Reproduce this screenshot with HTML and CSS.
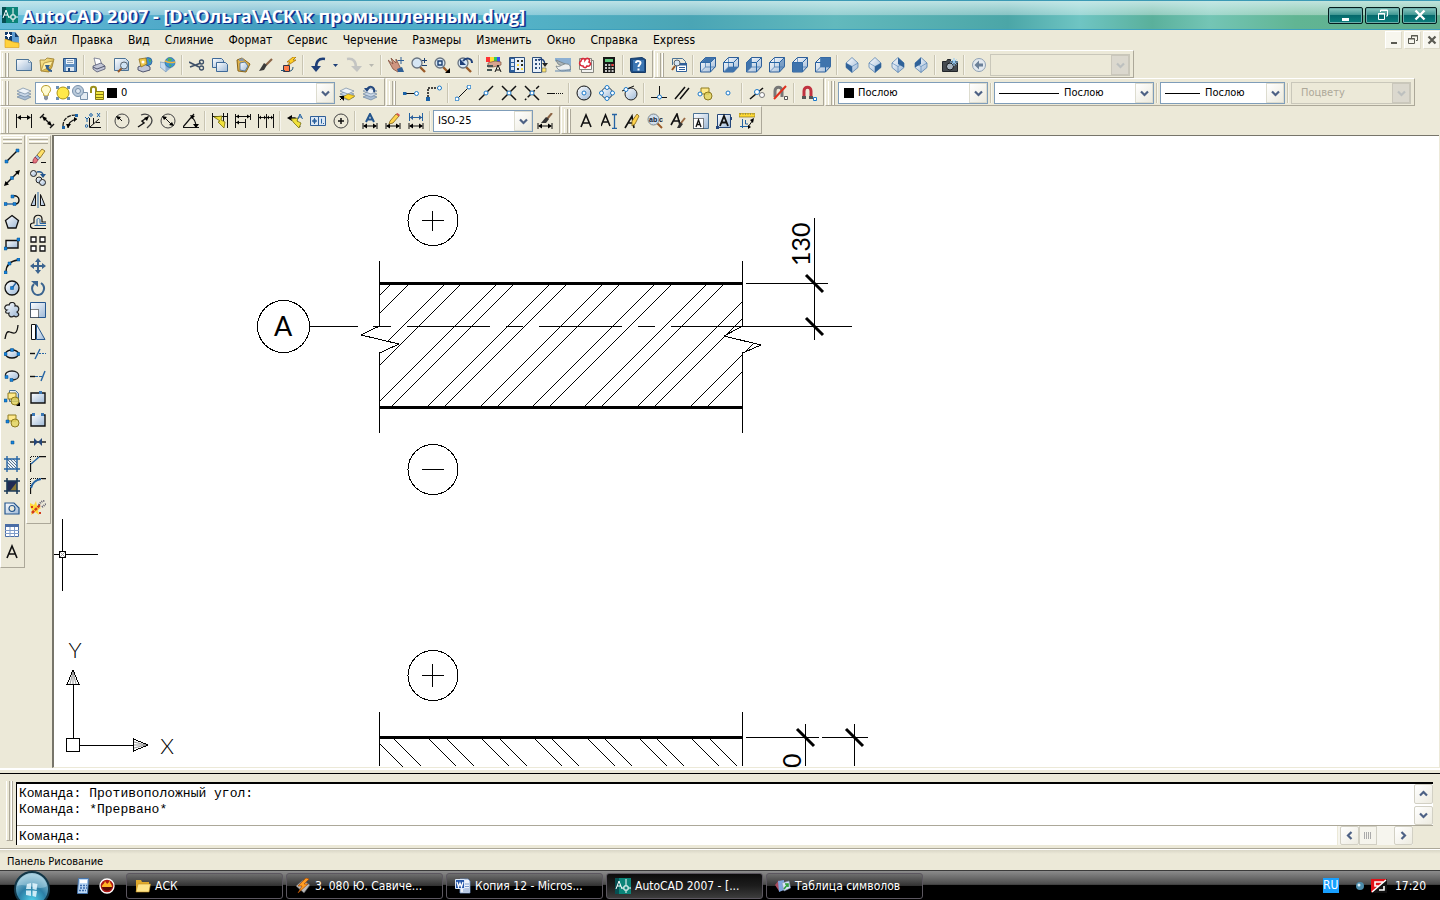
FILE: index.html
```html
<!DOCTYPE html>
<html lang="ru">
<head>
<meta charset="utf-8">
<title>AutoCAD 2007 - [D:\Ольга\АСК\к промышленным.dwg]</title>
<link rel="stylesheet" href="styles.css">
</head>
<body>
<svg class="defs" aria-hidden="true">
  <defs>
    <linearGradient id="gp" x1="0" y1="0" x2="1" y2="1"><stop offset="0" stop-color="#fff"/><stop offset="1" stop-color="#9db8d6"/></linearGradient>
    <linearGradient id="gy" x1="0" y1="0" x2="1" y2="1"><stop offset="0" stop-color="#fff3a8"/><stop offset="1" stop-color="#c99a1c"/></linearGradient>
    <radialGradient id="orb" cx=".5" cy=".85" r=".9"><stop offset="0" stop-color="#4fd0ea"/><stop offset=".45" stop-color="#2c7fa6"/><stop offset="1" stop-color="#b9d9e6"/></radialGradient>
    <symbol id="acad" viewBox="0 0 16 16"><path fill="#0b8478" d="M0 0h16v16H0z"/><path fill="#064f52" d="M0 0h4v16H0z"/><path class="w" d="M1 11 4 3l3 8M2 8h4M11 1v14M7 10h9"/><path fill="#0b8478" stroke="#fff" d="M9 8h4v4H9z"/></symbol>
    <symbol id="layers" viewBox="0 0 16 16"><path fill="#a9bdd4" stroke="#5c7796" stroke-width=".6" d="m1 12 6-3 8 3-6 3z"/><path fill="#c8d6e6" stroke="#5c7796" stroke-width=".6" d="m1 9 6-3 8 3-6 3z"/><path fill="#eef3f8" stroke="#5c7796" stroke-width=".6" d="m1 6 6-3 8 3-6 3z"/></symbol>
    <symbol id="zoomglass" viewBox="0 0 16 16"><path stroke="#9a5a28" stroke-width="2.4" d="m9 10 5 5"/><circle cx="6" cy="6" r="5" fill="#d6e6f5" stroke="#6a7480" stroke-width="1.3"/></symbol>
    <symbol id="dimbase" viewBox="0 0 16 16"><path class="k" d="M1 10v6M15 10v6M2 13h12"/><path d="M1 13l4-2.500v5zM15 13l-4-2.500v5z"/></symbol>
    <symbol id="shapes" viewBox="0 0 16 16"><path fill="#ffe98a" stroke="#8d7a1f" d="M4 3h8v6H4z"/><circle cx="11" cy="11" r="4" fill="#e4d35a" fill-opacity=".8" stroke="#8d7a1f"/></symbol>
    <symbol id="cube" viewBox="0 0 16 16"><path fill="url(#gp)" stroke="#2f5f98" d="m.500 5.500 5-5h10v9l-5 5.500H.500z"/><path class="b2" stroke-opacity=".6" d="M5.500.500v9.500h10M5.500 10l-5 5"/><path class="b2" d="M.5 5.500h10v9.500M10.500 5.500l5-5"/></symbol>
    <symbol id="gem" viewBox="0 0 16 16"><path fill="url(#gp)" stroke="#5b84b0" stroke-width=".8" d="m8 .500 6 5.500v4.500l-6 5-6-5V6z"/><path class="b2" stroke-opacity=".6" stroke-width=".8" d="m2 6 6 3.500L14 6M8 9.500v6"/></symbol>
    <symbol id="ar" viewBox="0 0 9 9"><path fill="none" stroke="#4d6185" stroke-width="2.200" d="m1 2.500 3.500 3.500L8 2.500"/></symbol>
  </defs>
</svg>

<header class="title">
  <svg class="ic" viewBox="0 0 16 16"><use href="#acad"/></svg>
  <h1>AutoCAD 2007 - [D:\Ольга\АСК\к промышленным.dwg]</h1>
  <div class="winbtns">
    <button aria-label="Свернуть"><svg viewBox="0 0 12 12"><path fill="#fff" d="M2 9h7v3H2z"/></svg></button>
    <button aria-label="Восстановить"><svg viewBox="0 0 12 12"><path class="w" d="M3.500 3V1h7v6H9M4 1.500h7"/><path class="w" d="M1.500 4.500h6v6h-6zM1 5h7"/></svg></button>
    <button aria-label="Закрыть"><svg viewBox="0 0 12 12"><path stroke="#fff" stroke-width="2.400" d="m1.500 1.500 9 9m0-9-9 9"/></svg></button>
  </div>
</header>

<nav class="menu">
  <svg class="ic" viewBox="0 0 16 16"><path fill="#123b6c" d="M1 0h10l4 5v6H1z"/><path fill="#5f9cd2" d="M11 0v5h4v6H8V0z"/><path stroke="#fff" fill="none" d="M4.500 0v7M1 3.500h7"/><path fill="#fff" d="M3 2h3v3H3z"/><path fill="#ffd23c" stroke="#d99a12" stroke-width=".6" d="m1 7 6 2 2 1 6 1v4.500H1z"/></svg>
  <button>Файл</button><button>Правка</button><button>Вид</button><button>Слияние</button><button>Формат</button><button>Сервис</button><button>Черчение</button><button>Размеры</button><button>Изменить</button><button>Окно</button><button>Справка</button><button>Express</button>
  <div class="mdi">
    <button aria-label="Свернуть окно"><svg viewBox="0 0 10 10"><path fill="#5a5a52" d="M2 7h6v2H2z"/></svg></button>
    <button aria-label="Восстановить окно"><svg viewBox="0 0 10 10"><path fill="none" stroke="#5a5a52" d="M3.500 3V.500h6v5H8M3 1h7M.500 3.500h6v5h-6zM0 4h7"/></svg></button>
    <button aria-label="Закрыть окно"><svg viewBox="0 0 10 10"><path stroke="#5a5a52" stroke-width="2.200" d="m1.500 1.500 7 7m0-7-7 7"/></svg></button>
  </div>
</nav>

<div class="row">
  <div class="tb" role="toolbar" aria-label="Стандартная">
    <i class="grip"></i>
    <button aria-label="Создать"><svg viewBox="0 0 16 16"><path fill="url(#gp)" stroke="#4c7396" d="M.500 2.500h12l3 3v8H.500z"/><path fill="#fff" stroke="#4c7396" stroke-width=".6" d="M12.500 2.500v3h3z"/></svg></button>
    <button aria-label="Открыть"><svg viewBox="0 0 16 16"><path fill="url(#gy)" stroke="#9a7a26" stroke-width=".8" d="M1 3h5l2-2 7 1-2 8-3 5-8-1z"/><path fill="#fff0a8" stroke="#9a7a26" stroke-width=".6" d="m2 14 3-8 9-2-3 6z"/><path stroke="#35608e" stroke-width="2" fill="none" d="M13 14c-3 0-4-2-5-4"/><path fill="#35608e" d="m6 8 5 0-3 5z"/></svg></button>
    <button aria-label="Сохранить"><svg viewBox="0 0 16 16"><path fill="#5e8fc2" stroke="#274f80" d="M1.500 1.500h13v13h-13z"/><path fill="#eef4fa" d="M4 2h8v5H4z"/><path fill="#8fa5ba" d="M5 3h6v1H5zM5 5h6v1H5z"/><path fill="#dce6f0" d="M4 10h8v4H4z"/><path fill="#274f80" d="M6 11h2v3H6z"/></svg></button>
    <i class="sep"></i>
    <button aria-label="Печать"><svg viewBox="0 0 16 16"><path fill="#fff" stroke="#6a6f86" stroke-width=".8" d="m3 1 6 1 2 6-6 1z"/><path fill="#c2c6d6" stroke="#50556e" stroke-width=".8" d="m2 9 8-3 4 3v3l-8 3-4-3z"/><path fill="none" stroke="#50556e" d="m2 10 4 2 8-3"/></svg></button>
    <button aria-label="Просмотр"><svg viewBox="0 0 16 16"><path fill="url(#gp)" stroke="#4c7396" d="M.500 1.500h11l3 3v9H.500z"/><path stroke="#9a5a28" stroke-width="2" d="m8 11-4 4"/><circle cx="10" cy="8.500" r="3.500" fill="#cfe2f4" stroke="#59626c"/></svg></button>
    <button aria-label="Публикация"><svg viewBox="0 0 16 16"><path fill="#c2c6d6" stroke="#50556e" d="m1 10 7-3 5 3v3l-7 2-5-2z"/><circle cx="11" cy="4.500" r="4" fill="#3f8ed0" stroke="#1d548c" stroke-width=".7"/><path fill="#efc84b" stroke="#93701a" stroke-width=".8" d="m2 2 7-1 1 6-6 3z"/><circle cx="6" cy="5" r="1.500" fill="#fff"/><path fill="#52b04a" d="m11 2 3 1-1 3z"/></svg></button>
    <button aria-label="3D DWF"><svg viewBox="0 0 16 16"><path fill="#c9dcef" stroke="#7596b8" stroke-width=".7" d="m0 5 6 1v9l-6-5z"/><path fill="#8fb0d2" d="m6 15 5-4V6H6z"/><circle cx="10" cy="5.500" r="5" fill="#3c95d2" stroke="#235f92" stroke-width=".6"/><path fill="none" stroke="#eeb53d" stroke-width="1.500" d="M5 4c4 2 7 2 10 1"/><path fill="#57b24d" d="m8 1 4 1-1 2-3 0zM9 7l3 1-2 2z"/></svg></button>
    <i class="sep"></i>
    <button aria-label="Вырезать"><svg viewBox="0 0 16 16"><path stroke="#3e5068" stroke-width="1.600" fill="none" d="m0 5 10 5M1 10l11-4"/><circle cx="12.500" cy="5" r="2" fill="none" stroke="#3e5068" stroke-width="1.300"/><circle cx="12.500" cy="11" r="2" fill="none" stroke="#3e5068" stroke-width="1.300"/></svg></button>
    <button aria-label="Копировать"><svg viewBox="0 0 16 16"><path fill="url(#gp)" stroke="#3f6a99" d="M.500 1.500h9l2 2v7H.500z"/><path fill="url(#gp)" stroke="#3f6a99" d="M4.500 5.500h9l2 2v7h-11z"/></svg></button>
    <button aria-label="Вставить"><svg viewBox="0 0 16 16"><path fill="#e0b24c" stroke="#8a6518" d="m2 3 5-2 8 6-4 8-8-1z"/><path fill="url(#gp)" stroke="#3f6a99" stroke-width=".8" d="m5 6 5-1 3 4-3 5-5-1z"/><path fill="#8b97a6" d="m4 2 4-1 1 3H4z"/></svg></button>
    <button aria-label="Копирование свойств"><svg viewBox="0 0 16 16"><path stroke="#8c6546" stroke-width="2.200" d="m8 8 6-6"/><path fill="#3a3a3a" d="m1 14 5-8 3 2-3 5z"/></svg></button>
    <button aria-label="Редактор блоков"><svg viewBox="0 0 16 16"><path fill="#ffcf26" stroke="#9c6500" stroke-width=".7" d="m12 0-6 5h3L6 9l9-6h-3l3-3z"/><path fill="#ff7a45" stroke="#334" d="M2.500 8.500h6v6h-6z"/><path stroke="#257" fill="none" d="M0 13.500h4M12 10c0 3-2 4-3 4"/></svg></button>
    <i class="sep"></i>
    <button aria-label="Отменить"><svg viewBox="0 0 16 16"><path fill="none" stroke="#1e3f78" stroke-width="2.500" d="M15 2C8 1 6 5 6 11"/><path fill="#1e3f78" d="M1 9h10l-5 6z"/></svg></button>
    <button class="drop" aria-label="Список отмен"><svg viewBox="0 0 5 3"><path fill="#1e3f78" d="M0 0h5L2.500 3z"/></svg></button>
    <button aria-label="Повторить"><svg viewBox="0 0 16 16"><path fill="none" stroke="#c3c4c2" stroke-width="2.500" d="M1 2c7-1 9 3 9 9"/><path fill="#c3c4c2" d="M5 9h11l-5 6z"/></svg></button>
    <button class="drop" aria-label="Список повторов"><svg viewBox="0 0 5 3"><path fill="#b8b8b0" d="M0 0h5L2.500 3z"/></svg></button>
    <i class="sep"></i>
    <button aria-label="Панорамирование"><svg viewBox="0 0 16 16"><path fill="#cf9580" stroke="#83503f" stroke-width=".8" d="m0 3 5 4-2-6 5 5 0-4 3 6 2 4-3 3-5-3z"/><path fill="#2e5f96" d="m9 12 5-2 2 5h-6z"/><path stroke="#2e5f96" d="M13 0v7M9.500 3.500h6.500"/></svg></button>
    <button aria-label="Зумирование в реальном времени"><svg viewBox="0 0 16 16"><use href="#zoomglass"/><path stroke="#1c3f70" d="M11 3.500h5M13.500 1v5M11 8.500h5"/></svg></button>
    <button aria-label="Зумирование рамкой"><svg viewBox="0 0 16 16"><use href="#zoomglass"/><path fill="none" stroke="#1c3f70" stroke-width="1.400" d="M4 4h4v4H4z"/><path d="M16 11v5h-5z"/></svg></button>
    <button aria-label="Зумирование предыдущее"><svg viewBox="0 0 16 16"><use href="#zoomglass"/><path fill="none" stroke="#1e3f78" stroke-width="2" d="M15 6c0-5-6-6-9-2"/><path fill="#1e3f78" d="M3 2v6h6z"/></svg></button>
    <i class="sep"></i>
    <button aria-label="Свойства"><svg viewBox="0 0 16 16"><path fill="#f33" d="M0 0h4v5H0z"/><path fill="#fd3" d="M4 0h4v5H4z"/><path fill="#3c5" d="M8 0h3v5H8z"/><path fill="#35e" d="M11 0h3v5h-3z"/><path fill="#d9a590" stroke="#7c5140" stroke-width=".7" d="m2 6 7-2 6 1v3l-8 2-5 0z"/><path stroke="#455" stroke-width="2" d="M1 9h6M1 13h5"/><path class="k" d="m9 15 3-7 3 7m-5-2h4"/></svg></button>
    <button aria-label="Центр управления"><svg viewBox="0 0 16 16"><path fill="#e8f0f8" stroke="#2d4f7c" d="M.500.500h15v15H.500z"/><path fill="#2d5f9c" d="M1 1h5v14H1z"/><path fill="#d9e5f2" d="M2 2h3v3H2zM2 6h3v3H2zM2 10h3v3H2z"/><path stroke="#2c2c1f" stroke-width="2" stroke-dasharray="2 2" d="M8 4h6M8 8h6M8 12h6"/><path fill="#ffdc3c" d="M8 7h2v2H8zM12 11h2v2h-2z"/></svg></button>
    <button aria-label="Инструментальные палитры"><svg viewBox="0 0 16 16"><path fill="#e8f0f8" stroke="#2d4f7c" d="M.500.500h9v15h-9z"/><path stroke="#2d4f7c" stroke-width="2" stroke-dasharray="2 2" d="M3 3h5M3 7h5M3 11h5"/><path fill="none" stroke="#1e3f78" stroke-width="1.500" d="M6 3c4-2 7 0 7 5"/><path fill="#222" d="M10 6h6l-3 4z"/><path fill="#ffe36a" stroke="#776" stroke-width=".7" d="M10 11h4v4h-4z"/></svg></button>
    <button aria-label="Диспетчер подшивок"><svg viewBox="0 0 16 16"><path fill="#8db0d2" d="M0 1h16v12L0 4z"/><path fill="#aeb7bb" stroke="#747d82" stroke-width=".8" d="m1 3 14 6v4L3 7z"/><path fill="#eef0f0" stroke="#747d82" stroke-width=".8" d="M1 9c4 2 7-3 11-2 3 0 4 3 3 6-5 0-9 3-13-2z"/><path fill="#5e86b0" d="m0 13 16-1v3H0z" fill-opacity=".5"/></svg></button>
    <button aria-label="Набор пометок"><svg viewBox="0 0 16 16"><path fill="#f2f2ef" stroke="#85857e" d="M3.500 3.500h12v12h-12z"/><path fill="#fff" stroke="#85857e" d="M1.500 1.500h12v11h-12z"/><path fill="#fff" stroke="#d9293a" stroke-width="1.600" d="M3 4c0-3 4-3 4-1 2-3 6-1 4 2 3 1 1 5-2 4-1 3-4 1-4 0-4 0-4-4-2-5z"/></svg></button>
    <button aria-label="Калькулятор"><svg viewBox="0 0 16 16"><path fill="#171717" d="M2 0h12v16H2z"/><path fill="#5fc77b" d="M4 2h8v3H4z"/><path stroke="#fff" stroke-width="1.500" stroke-dasharray="2 1.300" d="M4 8h9M4 11h9M4 14h9"/><path fill="#e33" d="M10.500 7h2v2h-2z"/></svg></button>
    <i class="sep"></i>
    <button aria-label="Справка"><svg viewBox="0 0 16 16"><path fill="#1f4f86" stroke="#163b66" d="M.500 1.500 12 .500l3.500 2v13h-14l-1-2z"/><path fill="#3c76b3" d="M3 3h11v11H3z"/><path fill="none" stroke="#fff" stroke-width="2" d="M6 6c0-3 5-2 4.500 0S8.500 8 8.500 10M8.500 11.500v2"/></svg></button>
  </div>
  <div class="tb" role="toolbar" aria-label="Вид">
    <i class="grip"></i>
    <button aria-label="Именованные виды"><svg viewBox="0 0 16 16"><path fill="none" stroke="#4c7396" d="M1.500 8V1.500h10l3 3V8"/><path fill="#fff" stroke="#2f5f98" d="M5.500 6.500h10v8h-10z"/><path fill="#2f5f98" d="M5 6h11v2.500H5zM8 10h6v1H8zM8 12h6v1H8z"/><circle cx="6" cy="6" r="3" fill="#d6e6f5" stroke="#59626c"/><path stroke="#9a5a28" stroke-width="2" d="m4 9-3 4"/></svg></button>
    <i class="sep"></i>
    <button aria-label="Сверху"><svg viewBox="0 0 16 16"><use href="#cube"/><path fill="#3f74ad" d="m1 5.500 5-5h9.500l-5 5z"/></svg></button>
    <button aria-label="Снизу"><svg viewBox="0 0 16 16"><use href="#cube"/><path fill="#3f74ad" d="m1 15 4.500-5h10l-5 5z"/></svg></button>
    <button aria-label="Слева"><svg viewBox="0 0 16 16"><use href="#cube"/><path fill="#3f74ad" d="m.500 5.500 5-5V10l-5 5z"/></svg></button>
    <button aria-label="Справа"><svg viewBox="0 0 16 16"><use href="#cube"/><path fill="#3f74ad" fill-opacity=".55" d="m10.500 5.500 5-5V10l-5 5z"/></svg></button>
    <button aria-label="Спереди"><svg viewBox="0 0 16 16"><use href="#cube"/><path fill="#3f74ad" d="M.500 5.500h10V15H.500z"/></svg></button>
    <button aria-label="Сзади"><svg viewBox="0 0 16 16"><use href="#cube"/><path fill="#3f74ad" d="M5.500.500h10V10h-10z"/></svg></button>
    <i class="sep"></i>
    <button aria-label="ЮЗ изометрия"><svg viewBox="0 0 16 16"><use href="#gem"/><path fill="#2f6299" d="m2 6 6 3.500v6l-6-5z"/></svg></button>
    <button aria-label="ЮВ изометрия"><svg viewBox="0 0 16 16"><use href="#gem"/><path fill="#2f6299" d="m14 6-6 3.500v6l6-5z"/></svg></button>
    <button aria-label="СВ изометрия"><svg viewBox="0 0 16 16"><use href="#gem"/><path fill="#2f6299" d="m8 .500 6 5.500v4.500L8 7z"/></svg></button>
    <button aria-label="СЗ изометрия"><svg viewBox="0 0 16 16"><use href="#gem"/><path fill="#2f6299" d="M8 .500 2 6v4.500L8 7z"/></svg></button>
    <i class="sep"></i>
    <button aria-label="Камера"><svg viewBox="0 0 16 16"><path fill="#454a4f" stroke="#22262a" d="M.500 4.500h4l1-2h3v2h7v10H.500z"/><circle cx="8" cy="9.500" r="3.500" fill="#a7b3be" stroke="#15181b"/><path stroke="#8fc7f2" d="M12 1v8M8 5h8M9.500 2.500l5 5m0-5-5 5"/></svg></button>
    <i class="sep"></i>
    <button aria-label="Предыдущий вид"><svg viewBox="0 0 16 16"><circle cx="8" cy="8" r="6.500" fill="#e3e9ef" stroke="#8fa1b4"/><path fill="#6b8098" d="m3.500 8 4.500-4.500V6.500h4v3H8v3z"/></svg></button>
    <label class="combo off view"><select disabled aria-label="Вид"><option></option></select><span class="arrow"><svg viewBox="0 0 9 9"><use href="#ar"/></svg></span></label>
  </div>
</div>

<div class="row">
  <div class="tb" role="toolbar" aria-label="Слои">
    <i class="grip"></i>
    <button aria-label="Диспетчер слоев"><svg viewBox="0 0 16 16"><use href="#layers"/></svg></button>
    <label class="combo layer"><select aria-label="Слой"><option>0</option></select>
      <span class="state">
        <svg viewBox="0 0 16 16"><path fill="#fffbd0" stroke="#b79a24" d="M8 .500c5 0 6 5 2.500 8L10 11H6l-.500-2.500C2 5.500 3 .500 8 .500z"/><path fill="#8a93a0" d="M6 11h4v3l-2 1.500L6 14z"/></svg>
        <svg viewBox="0 0 16 16"><path fill="#6b8fb5" d="M1 1h3v3H1zM12 1h3v3h-3zM1 12h3v3H1zM12 12h3v3h-3z"/><circle cx="8" cy="8" r="6" fill="#ffe94a" stroke="#ad9414"/></svg>
        <svg viewBox="0 0 16 16"><path fill="#e5ecf3" stroke="#7890aa" d="M8.500 7.500h7v7h-7z"/><circle cx="6" cy="6" r="5.500" fill="#b9cadb" stroke="#7890aa"/><circle cx="6" cy="6" r="2.500" fill="#dfe8f1" stroke="#7890aa"/></svg>
        <svg viewBox="0 0 16 16"><path fill="none" stroke="#9a8f1a" stroke-width="2" d="M2 8V4c0-3 5-3 5 0v4"/><path fill="#efe33c" stroke="#857a12" d="M6.500 6.500h8v8h-8z"/><path stroke="#857a12" d="M7 9.500h7M7 12.500h7"/></svg>
        <b class="swatch"></b>
      </span>
      <span class="arrow"><svg viewBox="0 0 9 9"><use href="#ar"/></svg></span></label>
    <button aria-label="Сделать слой текущим"><svg viewBox="0 0 16 16"><use href="#layers"/><path fill="#ffd629" stroke="#8a7417" stroke-width=".6" d="m4 12 5-3 7 2-6 4z"/><path d="M0 11h5v5z"/><path stroke="#000" d="m1 15 3-3"/></svg></button>
    <button aria-label="Предыдущее состояние слоев"><svg viewBox="0 0 16 16"><use href="#layers"/><path fill="none" stroke="#24487e" stroke-width="2" d="M12 7c1-5-4-7-7-3"/><path fill="#24487e" d="M2 3h6L5 7z"/></svg></button>
  </div>
  <div class="tb" role="toolbar" aria-label="Объектная привязка">
    <i class="grip"></i>
    <button aria-label="Точка отслеживания"><svg viewBox="0 0 16 16"><path class="k" d="M2 8.500h10"/><path fill="#1a62a8" d="M0 7h3.500v3H0z"/><circle class="n" cx="13.500" cy="8.500" r="2"/></svg></button>
    <button aria-label="Смещение"><svg viewBox="0 0 16 16"><path class="k" stroke-width="1.500" stroke-dasharray="2 1" d="M2 12V3h10"/><path fill="#1a62a8" d="M0 12h4v4H0z"/><circle class="n" cx="13.500" cy="3" r="2"/></svg></button>
    <i class="sep"></i>
    <button aria-label="Конечная точка"><svg viewBox="0 0 16 16"><path class="k" d="M2 14 14 2"/><circle class="n" cx="2" cy="14" r="2"/><circle class="n" cx="14" cy="2" r="2"/></svg></button>
    <button aria-label="Середина"><svg viewBox="0 0 16 16"><path class="k" stroke-width="1.500" d="M1 15 15 1"/><circle class="n" cx="8" cy="8" r="2"/></svg></button>
    <button aria-label="Пересечение"><svg viewBox="0 0 16 16"><path class="k" stroke-width="1.500" d="M1 1l14 14M15 1 1 15"/><circle class="n" cx="8" cy="8" r="2"/></svg></button>
    <button aria-label="Кажущееся пересечение"><svg viewBox="0 0 16 16"><path class="k" stroke-width="1.500" d="m1 1 14 14"/><path class="k" stroke-width="1.500" stroke-dasharray="4 2" d="M15 1 1 15"/><circle class="n" cx="8" cy="8" r="2"/></svg></button>
    <button aria-label="Продолжение линии"><svg viewBox="0 0 16 16"><path class="k" d="M0 8.500h8"/><path class="k" stroke-dasharray="1 1" d="M9 8.500h7"/></svg></button>
    <i class="sep"></i>
    <button aria-label="Центр"><svg viewBox="0 0 16 16"><circle cx="8" cy="8" r="7" fill="url(#gp)" stroke="#111"/><circle class="n" cx="8" cy="8" r="2"/></svg></button>
    <button aria-label="Квадрант"><svg viewBox="0 0 16 16"><circle cx="8" cy="8" r="5.500" fill="url(#gp)" stroke="#345"/><circle class="n" cx="8" cy="2.500" r="2"/><circle class="n" cx="8" cy="13.500" r="2"/><circle class="n" cx="2.500" cy="8" r="2"/><circle class="n" cx="13.500" cy="8" r="2"/></svg></button>
    <button aria-label="Касательная"><svg viewBox="0 0 16 16"><circle cx="9" cy="9" r="6" fill="url(#gp)" stroke="#222"/><path class="k" d="M0 6 12 1"/><circle class="n" cx="4" cy="4.500" r="2"/></svg></button>
    <i class="sep"></i>
    <button aria-label="Нормаль"><svg viewBox="0 0 16 16"><path class="k" d="M8.500 1v10M0 12.500h16"/><circle class="n" cx="8.500" cy="12" r="2"/></svg></button>
    <button aria-label="Параллельно"><svg viewBox="0 0 16 16"><path class="k" stroke-width="1.500" d="M1 14 11 2M6 14 15 3"/></svg></button>
    <button aria-label="Точка вставки"><svg viewBox="0 0 16 16"><use href="#shapes"/><circle class="n" cx="3" cy="9" r="2"/></svg></button>
    <button aria-label="Узел"><svg viewBox="0 0 16 16"><circle class="n" cx="8" cy="8" r="2"/></svg></button>
    <i class="sep"></i>
    <button aria-label="Ближайшая"><svg viewBox="0 0 16 16"><path class="k" stroke-width="1.500" d="m1 14 13-11"/><circle class="n" cx="8" cy="7" r="2.500"/><circle cx="13" cy="10" r="2.500" fill="#fff" stroke="#777"/></svg></button>
    <button aria-label="Отключить привязку"><svg viewBox="0 0 16 16"><path fill="none" stroke="#777" stroke-width="3" d="M3 12V6c0-5 7-5 7 0v6"/><path stroke="#e0301e" stroke-width="2" d="M2 14 14 1"/><path fill="#fff" stroke="#555" d="M12.500 11.500h3v3h-3z"/></svg></button>
    <i class="sep"></i>
    <button aria-label="Режимы привязки"><svg viewBox="0 0 16 16"><path fill="none" stroke="#c0323f" stroke-width="3" d="M3 12V6c0-5 7-5 7 0v6"/><path fill="#555" d="M1 11h4v3H1zM8 11h4v3H8z"/><path fill="#fff" stroke="#1a78c8" d="M12.500 12.500h3v3h-3z"/></svg></button>
  </div>
  <div class="tb" role="toolbar" aria-label="Свойства объектов">
    <i class="grip"></i>
    <label class="combo color"><select aria-label="Цвет"><option>Послою</option></select><span class="state"><b class="swatch"></b></span><span class="arrow"><svg viewBox="0 0 9 9"><use href="#ar"/></svg></span></label>
    <i class="sep"></i>
    <label class="combo ltype"><select aria-label="Тип линии"><option>Послою</option></select><span class="state"><b class="rule"></b></span><span class="arrow"><svg viewBox="0 0 9 9"><use href="#ar"/></svg></span></label>
    <i class="sep"></i>
    <label class="combo lweight"><select aria-label="Вес линии"><option>Послою</option></select><span class="state"><b class="rule"></b></span><span class="arrow"><svg viewBox="0 0 9 9"><use href="#ar"/></svg></span></label>
    <i class="sep"></i>
    <label class="combo off pstyle"><select disabled aria-label="Стиль печати"><option>Поцвету</option></select><span class="arrow"><svg viewBox="0 0 9 9"><use href="#ar"/></svg></span></label>
  </div>
</div>

<div class="row">
  <div class="tb" role="toolbar" aria-label="Размеры">
    <i class="grip"></i>
    <button aria-label="Линейный"><svg viewBox="0 0 16 16"><path class="k" d="M.500 1v14M15.500 1v14M2 4.500h12"/><path d="M1 4.500l4-2.500v5zM15 4.500l-4-2.500v5z"/></svg></button>
    <button aria-label="Параллельный"><svg viewBox="0 0 16 16"><path class="k" stroke-width="1.400" d="m1 5 4-4M11 15l4-4M4 4l8 8"/><path d="M3 3l5 2-3 3zM13 13l-5-2 3-3z"/></svg></button>
    <button aria-label="Длина дуги"><svg viewBox="0 0 16 16"><path fill="none" stroke="#111" stroke-width="1.200" d="M6 15c0-5 4-8 9-9"/><path class="k" stroke-width="1.200" stroke-dasharray="4 1" d="M1 13C1 6 6 2 14 2"/><path fill="#1a62a8" d="M13 1h3v3h-3zM0 13h3v3H0z"/><path d="M4 11h5l-3 4zM12 4v5l3-3z"/></svg></button>
    <button aria-label="Ординатный"><svg viewBox="0 0 16 16"><path class="k" d="M4.500 5v9.500H16M5 14l9-8M8.500 5v6M11 9.500h4"/><path fill="none" stroke="#1a62a8" d="m0 4 2 2 2-2M2 6v3M12 0l3 4m0-4-3 4"/><circle cx="6" cy="2" r="1.300" fill="none" stroke="#1a62a8"/><circle cx="1.500" cy="13" r="1.300" fill="none" stroke="#1a62a8"/></svg></button>
    <i class="sep"></i>
    <button aria-label="Радиус"><svg viewBox="0 0 16 16"><circle cx="8" cy="8" r="7" fill="none" stroke="#444"/><path class="k" d="m8 8-4-4"/><path d="m2 3 5 1-3 3z"/></svg></button>
    <button aria-label="С изломом"><svg viewBox="0 0 16 16"><path fill="none" stroke="#444" stroke-width="1.300" d="M4 2c8-3 14 4 9 10l-3 3"/><path class="k" stroke-width="1.500" d="m1 14 6-4-2-2 6-4"/><path d="m12 3-2 5-3-3z"/></svg></button>
    <button aria-label="Диаметр"><svg viewBox="0 0 16 16"><circle cx="8" cy="8" r="7" fill="none" stroke="#444"/><path class="k" d="m4 4 8 8"/><path d="m2 3 5 1-3 3zM14 13l-5-1 3-3z"/></svg></button>
    <button aria-label="Угловой"><svg viewBox="0 0 16 16"><path class="k" stroke-width="1.200" d="M0 14.500h16M0 14 11 1M8 4c4 2 5 5 5 10"/><path d="m7 2 5 1-3 3zM10 11h6l-3 4z"/></svg></button>
    <i class="sep"></i>
    <button aria-label="Быстрый размер"><svg viewBox="0 0 16 16"><path class="k" d="M.500 0v15M15.500 0v15M1 3.500h14M11.500 0v8"/><path fill="#f1e13b" stroke="#77700f" stroke-width=".8" d="m2 4 8-1-1 4 4 2-1 6-6-6 2-1z"/></svg></button>
    <button aria-label="Базовый"><svg viewBox="0 0 16 16"><path class="k" d="M.500 1v14M1 3.500h14M1 9.500h9M10.500 6v9M15.500 1v6"/><path d="m1 3.500 3-2v4zM15 3.500l-3-2v4zM1 9.500l3-2v4z"/></svg></button>
    <button aria-label="Цепь"><svg viewBox="0 0 16 16"><path class="k" d="M.500 1v14M8.500 1v14M15.500 1v14M1 4.500h14"/><path d="m1 4.500 2-2v4zM8 4.500l-2-2v4zM9 4.500l2-2v4zM15 4.500l-2-2v4z"/></svg></button>
    <i class="sep"></i>
    <button aria-label="Выноска"><svg viewBox="0 0 16 16"><path d="m0 5 5-3v6z"/><path class="k" stroke-width="1.400" d="M3 5h5l5 9"/><path fill="#f1e13b" stroke="#77700f" stroke-width=".8" d="m4 6 7-1-1 3 4 2-2 5-5-5z"/><path class="b2" d="m11 6 2-5 2.500 5m-4-2h3.500"/></svg></button>
    <button aria-label="Допуск"><svg viewBox="0 0 16 16"><path fill="#dbe7f3" stroke="#2f5f98" d="M.500 3.500h15v9H.500zM8.500 3.500v9"/><path class="b2" d="M4.500 5v6M2 8h5M11 6h.500v4.500M13.500 10v1"/><circle cx="4.500" cy="8" r="1.500" fill="none" stroke="#2f5f98"/></svg></button>
    <button aria-label="Маркер центра"><svg viewBox="0 0 16 16"><circle cx="8" cy="8" r="7" fill="none" stroke="#444"/><path class="k" stroke-width="1.500" d="M8 5v6M5 8h6"/></svg></button>
    <i class="sep"></i>
    <button aria-label="Редактировать размер"><svg viewBox="0 0 16 16"><use href="#dimbase"/><path fill="none" stroke="#24568e" stroke-width="2" d="m4 9 4-8 4 8M5.500 6.500h5"/></svg></button>
    <button aria-label="Редактировать текст"><svg viewBox="0 0 16 16"><use href="#dimbase"/><path fill="#ffd34d" stroke="#7f6216" stroke-width=".8" d="m5 8 6-7 3 2-6 7-4 1z"/><path fill="#d9534f" d="m11 1 1.500-1L15 2l-1 1.500z"/></svg></button>
    <button aria-label="Обновить размер"><svg viewBox="0 0 16 16"><use href="#dimbase"/><path class="b2" d="M1.500 0v8M14.500 0v8M1 4.500h14"/><path fill="#2f5f98" d="m2 4.500 3-2.500v5zM14 4.500l-3-2.500v5z"/></svg></button>
    <i class="sep"></i>
    <label class="combo dim"><select aria-label="Размерный стиль"><option>ISO-25</option></select><span class="arrow"><svg viewBox="0 0 9 9"><use href="#ar"/></svg></span></label>
    <button aria-label="Размерные стили"><svg viewBox="0 0 16 16"><use href="#dimbase"/><path stroke="#8c6546" stroke-width="2" d="m10 6 5-6"/><path fill="#333" d="m4 10 5-6 3 2-3 4z"/></svg></button>
  </div>
  <div class="tb" role="toolbar" aria-label="Текст">
    <i class="grip"></i>
    <button aria-label="Многострочный текст"><svg viewBox="0 0 16 16"><path class="k" stroke-width="1.600" d="m3 14 5-12 5 12M5 10h6"/></svg></button>
    <button aria-label="Однострочный текст"><svg viewBox="0 0 16 16"><path class="k" stroke-width="1.600" d="m0 13 4.500-11L9 13M2 9h5"/><path class="b2" stroke-width="1.300" d="M11 1.500h5M11 15.500h5M13.500 2v13"/></svg></button>
    <button aria-label="Редактировать"><svg viewBox="0 0 16 16"><path class="k" stroke-width="1.600" d="M1 15 8 3l2 12M4 10h6"/><path fill="#ffd34d" stroke="#7f6216" stroke-width=".8" d="m8 8 5-7 2 2-4 8-3 2z"/></svg></button>
    <button aria-label="Найти и заменить"><svg viewBox="0 0 16 16"><path stroke="#9a5a28" stroke-width="2" d="m10 10 5 5"/><circle cx="6.500" cy="6.500" r="5.500" fill="#cfdeec" stroke="#7e8890"/><text x="2" y="9" class="tiny">ab</text><text x="12" y="9" class="tiny">c</text></svg></button>
    <button aria-label="Текстовый стиль"><svg viewBox="0 0 16 16"><path class="k" stroke-width="1.600" d="m1 12 6-11 3 11M3 8h7"/><path stroke="#9a6a44" stroke-width="2" d="m15 5-4 5"/><path fill="#333" d="m7 15 3-6 3 2-3 4z"/></svg></button>
    <button aria-label="Масштаб текста"><svg viewBox="0 0 16 16"><path fill="url(#gp)" stroke="#4c7396" d="M.500.500h15v15H.500z"/><path fill="#fff" stroke="#111" stroke-dasharray="1 1" d="M.500 5.500h10v10H.500z"/><path class="k" stroke-width="1.300" d="m3 14 2.500-7L8 14m-4-2.500h3.500"/></svg></button>
    <button aria-label="Выравнивание текста"><svg viewBox="0 0 16 16"><path fill="url(#gp)" stroke="#24467a" d="M1.500 1.500h13v13h-13z"/><path class="k" stroke-width="1.800" d="m4 13 4-10 4 10M5.500 9.500h5"/><path fill="#24467a" d="M0 13h3v3H0zM14 4h2v3h-2z"/></svg></button>
    <button aria-label="Пространства"><svg viewBox="0 0 16 16"><path fill="#ffdb32" stroke="#8a7417" stroke-width=".7" d="M0 0h16v4H0z"/><path stroke="#665" stroke-dasharray="1 1.500" d="M1 1h14"/><path class="b2" d="M3.500 6v9M1 13.500h9M6.500 7v4H9"/><path class="k" d="m9 14 5-7"/><path d="m15 5-4 2 3 3zM9 16v-4l3 2z"/></svg></button>
  </div>
</div>

<main class="work">
  <div class="vtb" role="toolbar" aria-label="Рисование">
    <i class="hgrip"></i>
    <button aria-label="Отрезок"><svg viewBox="0 0 16 16"><path class="k" stroke-width="1.500" d="M2 14 14 2"/><path class="p" d="M1 12h3v3H1zM12 1h3v3h-3z"/></svg></button>
    <button aria-label="Прямая"><svg viewBox="0 0 16 16"><path class="k" stroke-width="1.400" d="M2 14 14 2"/><path d="M0 16l1.500-5 3.500 3.500zM16 0l-5 1.500 3.500 3.500z"/><path class="p" d="M6.500 6.500h3v3h-3z"/></svg></button>
    <button aria-label="Полилиния"><svg viewBox="0 0 16 16"><path class="b2" stroke-width="1.400" d="M2 12h9"/><path class="k" stroke-width="1.400" d="M9 4c3-1 6 1 6 4s-2 4-4 4"/><path class="p" d="M0 10.500h3v3H0zM9 10.500h3v3H9zM7 3h3v3H7z"/></svg></button>
    <button aria-label="Многоугольник"><svg viewBox="0 0 16 16"><path fill="url(#gp)" stroke="#111" stroke-width="1.300" d="m8 1.500 6.500 5L12 14H4L1.500 6.500z"/></svg></button>
    <button aria-label="Прямоугольник"><svg viewBox="0 0 16 16"><path fill="url(#gp)" stroke="#111" stroke-width="1.400" d="M2 4.500h12v7.500H2z"/><path class="p" d="M0 11h3v3H0zM13 2h3v3h-3z"/></svg></button>
    <button aria-label="Дуга"><svg viewBox="0 0 16 16"><path class="k" stroke-width="1.300" d="M2 14C2 7 7 3 14 2"/><path class="p" d="M0 13h3v3H0zM13 0h3v3h-3zM4 4h3v3H4z"/></svg></button>
    <button aria-label="Круг"><svg viewBox="0 0 16 16"><circle cx="8" cy="8" r="7" fill="url(#gp)" stroke="#111" stroke-width="1.300"/><path class="b2" stroke-width="1.400" d="m8 8 4-5"/><path class="p" d="M6.500 6.500h3v3h-3z"/></svg></button>
    <button aria-label="Облако"><svg viewBox="0 0 16 16"><path fill="url(#gp)" stroke="#222" stroke-width="1.200" d="M3 8C-1 7 1 2 5 3c1-4 7-3 6 1 4-1 5 4 2 6 4 3 0 6-3 4-3 2-6 0-5-3-4 1-4-2-2-3z"/></svg></button>
    <button aria-label="Сплайн"><svg viewBox="0 0 16 16"><path class="k" stroke-width="1.300" d="M1 15C2 9 3 7 6 8s7 4 8-7"/></svg></button>
    <button aria-label="Эллипс"><svg viewBox="0 0 16 16"><ellipse cx="8" cy="8" rx="6.500" ry="4" fill="url(#gp)" stroke="#111" stroke-width="1.300"/><path class="p" d="M0 6.500h3v3H0zM13 6.500h3v3h-3zM6.500 2.500h3v3h-3z"/></svg></button>
    <button aria-label="Эллиптическая дуга"><svg viewBox="0 0 16 16"><path fill="url(#gp)" stroke="#222" stroke-width="1.300" d="M2 9C0 5 4 3 8 3c9 0 9 9 0 9"/><path class="p" d="M1 7.500h3v3H1zM6 10.500h3v3H6z"/></svg></button>
    <button aria-label="Вставка блока"><svg viewBox="0 0 16 16"><path fill="url(#gp)" stroke="#4c7396" d="M5.500.500h6l3 3v8h-9z"/><use href="#shapes"/><path class="p" d="M0 9h3v3H0z"/><path d="M16 12v4h-4z"/></svg></button>
    <button aria-label="Создать блок"><svg viewBox="0 0 16 16"><use href="#shapes"/><path class="p" d="M2 8h3v3H2z"/></svg></button>
    <button aria-label="Точка"><svg viewBox="0 0 16 16"><path class="p" d="M7 7h3v3H7z"/></svg></button>
    <button aria-label="Штриховка"><svg viewBox="0 0 16 16"><path fill="#e9f1f8" d="M3 3h10v10H3z"/><path stroke="#47657f" stroke-width=".9" d="m3 3 10 10M6 3l7 7M9 3l4 4M3 6l7 7M3 9l4 4"/><path class="b2" stroke-width="1.400" d="M3 0v16M13 0v16M0 3h16M0 13h16"/></svg></button>
    <button aria-label="Градиент"><svg viewBox="0 0 16 16"><path fill="#202b54" d="M3 3h10v10H3z"/><path fill="#8a7a38" d="M13 4v9H6z"/><path stroke="#1c3a58" fill="none" stroke-width="1.600" d="M3 0v16M13 0v16M0 3h16M0 13h16"/></svg></button>
    <button aria-label="Область"><svg viewBox="0 0 16 16"><path fill="url(#gp)" stroke="#24568e" stroke-width="1.200" d="M1 3h9l5 5v6H1z"/><circle cx="8" cy="8.500" r="3" fill="#ece9d8" stroke="#24568e" stroke-width="1.200"/></svg></button>
    <button aria-label="Таблица"><svg viewBox="0 0 16 16"><path fill="#fff" stroke="#4a6da5" d="M1.500 2.500h13v12h-13z"/><path fill="#4a6da5" d="M1 2h14v3H1z"/><path stroke="#7f9cc9" d="M1 8.500h14M1 11.500h14M6 5v10M10.500 5v10"/></svg></button>
    <button aria-label="Текст"><svg viewBox="0 0 16 16"><path class="k" stroke-width="1.600" d="m3 14 5-12 5 12M5 10h6"/></svg></button>
  </div>
  <div class="vtb" role="toolbar" aria-label="Редактирование">
    <i class="hgrip"></i>
    <button aria-label="Стереть"><svg viewBox="0 0 16 16"><path class="k" d="M0 14.500h3M11 14.500h5"/><path fill="#ffe169" stroke="#7f6216" stroke-width=".8" d="m7 7 5-6 3 2-5 7z"/><path fill="#9db8d6" stroke="#446" stroke-width=".5" d="m5 9 2-2 3 3-2 2z"/><path fill="#e2777d" stroke="#813" stroke-width=".6" d="m5 9 3 3-2 3H3l0-3z"/></svg></button>
    <button aria-label="Копировать объект"><svg viewBox="0 0 16 16"><circle cx="3.500" cy="3.500" r="3" fill="url(#gp)" stroke="#222"/><circle cx="9" cy="10" r="3" fill="url(#gp)" stroke="#222"/><circle cx="12.500" cy="12.500" r="3" fill="url(#gp)" stroke="#222"/><path fill="none" stroke="#24568e" stroke-width="1.500" d="M7 2c4-1 6 1 6 3"/><path fill="#24568e" d="M10 4h6l-3 4z"/></svg></button>
    <button aria-label="Зеркало"><svg viewBox="0 0 16 16"><path fill="url(#gp)" stroke="#111" d="M5.500 2.500v11H1z"/><path fill="url(#gp)" stroke="#111" d="M10.500 2.500v11H15z"/><path class="b2" d="M8 0v16"/></svg></button>
    <button aria-label="Подобие"><svg viewBox="0 0 16 16"><path fill="none" stroke="#111" stroke-width="1.200" d="M16 14.500H3C-.500 14-.500 9 3 9h1V5c0-5 8-5 8 0v3h4"/><path class="b2" d="M16 11.500H4.500M7 11V6c0-2 3-2 3 0v3.500h6"/></svg></button>
    <button aria-label="Массив"><svg viewBox="0 0 16 16"><path fill="#fff" stroke="#111" stroke-width="1.300" d="M1 1h5v5H1zM10 1h5v5h-5zM1 10h5v5H1zM10 10h5v5h-5z"/></svg></button>
    <button aria-label="Перенести"><svg viewBox="0 0 16 16"><path stroke="#3b648f" stroke-width="2" d="M8 2v12M2 8h12"/><path fill="#3b648f" d="m8 0 3 4H5zM8 16l3-4H5zM0 8l4-3v6zM16 8l-4-3v6z"/></svg></button>
    <button aria-label="Повернуть"><svg viewBox="0 0 16 16"><path fill="none" stroke="#3b648f" stroke-width="2" d="M11 3c6 4 2 12-3 12S0 8 4 4"/><path fill="#3b648f" d="M1 1h7v6z"/></svg></button>
    <button aria-label="Масштаб"><svg viewBox="0 0 16 16"><path fill="url(#gp)" stroke="#24568e" d="M.500.500h15v15H.500z"/><path fill="#fff" stroke="#111" stroke-dasharray="1 1" d="M.500 7.500h8v8h-8z"/></svg></button>
    <button aria-label="Растянуть"><svg viewBox="0 0 16 16"><path fill="url(#gp)" stroke="#24568e" d="M6.500.500 15 15.500H6.500z"/><path fill="#fff" stroke="#111" d="M1.500.500h4v15h-4z"/></svg></button>
    <button aria-label="Обрезать"><svg viewBox="0 0 16 16"><path class="k" stroke-width="1.400" d="M0 7.500h5"/><path class="b2" stroke-width="1.400" d="M5 13 10 3"/><path class="b2" stroke-dasharray="2 1" d="M9 7.500h7"/></svg></button>
    <button aria-label="Удлинить"><svg viewBox="0 0 16 16"><path class="k" stroke-width="1.400" d="M0 8.500h5"/><path class="b2" stroke-dasharray="3 1" d="M5 8.500h7"/><path class="b2" stroke-width="1.400" d="m11 13 4-10"/></svg></button>
    <button aria-label="Разорвать в точке"><svg viewBox="0 0 16 16"><path fill="url(#gp)" stroke="#111" stroke-width="1.400" d="M1 3h14v10H1z"/><path fill="#3b78b5" d="M9 1h3v3H9z"/></svg></button>
    <button aria-label="Разорвать"><svg viewBox="0 0 16 16"><path fill="url(#gp)" stroke="#111" stroke-width="1.400" d="M3 3H1v11h14V3h-2"/><path fill="#3b78b5" d="M2 1h3v3H2zM11 1h3v3h-3z"/></svg></button>
    <button aria-label="Соединить"><svg viewBox="0 0 16 16"><path class="k" stroke-width="1.400" d="M0 8h16"/><path fill="#24467a" d="m4 4 4 4-4 4zM12 4 8 8l4 4z"/></svg></button>
    <button aria-label="Фаска"><svg viewBox="0 0 16 16"><path class="k" stroke-dasharray="1 1" d="M.500 8V.500H9"/><path class="k" stroke-width="1.300" d="M.500 8v8M9 .500h7"/><path class="b2" stroke-width="1.400" d="m1 8 8-7"/></svg></button>
    <button aria-label="Сопряжение"><svg viewBox="0 0 16 16"><path class="k" stroke-dasharray="1 1" d="M.500 10V.500H12"/><path class="k" stroke-width="1.300" d="M.500 10v6M12 .500h4"/><path class="b2" stroke-width="2" d="M1 10c1-5 5-8 10-9"/></svg></button>
    <button aria-label="Расчленить"><svg viewBox="0 0 16 16"><path fill="#ffd83a" d="m0 3 4 2 2-4 1 5 4 2-3 2 1 5-4-3-4 3 1-5-2-3z"/><path stroke="#d23a1f" stroke-width="2.500" stroke-dasharray="3 1" d="m2 13 8-8"/><path fill="none" stroke="#556" stroke-dasharray="1 1" stroke-width="2" d="M9 5c2-4 4-4 6-4M12 7l4-3"/><path fill="#d23a1f" d="M1 6h2v2H1zM9 12h2v2H9z"/></svg></button>
  </div>

  <div class="canvas">
    <svg class="drawing" aria-label="Чертеж">
      <defs><clipPath id="wall"><path d="M379 284H742V326L724 336L761 345L742 353V407H379V353L399 344L361 335L379 326Z"/></clipPath></defs>
      <g transform="translate(-54 -136)">
        <g class="thin">
          <circle cx="433" cy="220.500" r="25"/><path d="M422 220.500h22M432.500 211v20"/>
          <circle cx="433" cy="469.500" r="25"/><path d="M422 469.500h22"/>
          <circle cx="433" cy="675.500" r="25"/><path d="M422 675.500h22M432.500 664v23"/>
          <circle cx="283.500" cy="326.500" r="26"/>
          <path d="M379.500 261V326L361 335L399 344L379.500 353V433M742.500 261V326L724 336L761 345L742.500 353V433"/>
          <path d="M310 326.500H358M373 326.500H391M407 326.500H490M506 326.500H523M539 326.500H622M638 326.500H655M671 326.500H852"/>
          <path d="M746 283.500H828M814.500 218V340"/>
          <path d="M379.500 712V766M742.500 712V766M746 737.500H819M822 737.500H868M805.500 724V766M854.500 724V766"/>
          <path d="M379 743l24 24M393 738l28 28M428 738l28 28M446 738l28 28M481 738l28 28M499 738l28 28M534 738l28 28M551 738l28 28M587 738l28 28M604 738l28 28M639 738l28 28M656 738l28 28M691 738l28 28M709 738l28 28"/>
          <path clip-path="url(#wall)" d="M391 284l-123 123M409 284l-123 123M445 284l-123 123M461 284l-123 123M497 284l-123 123M514 284l-123 123M550 284l-123 123M567 284l-123 123M603 284l-123 123M620 284l-123 123M655 284l-123 123M672 284l-123 123M707 284l-123 123M724 284l-123 123M760 284l-123 123M777 284l-123 123M813 284l-123 123M830 284l-123 123"/>
          <path d="M54 554.500H59M66 554.500H98M62.500 519V551M62.500 558V591M59.500 551.500h6v6h-6z"/>
          <path d="M66.500 738.500h13v13h-13zM73.500 738V684M80 745.500H133M73 670l-6 14.500h12zM148 745l-14.500-6v12z"/>
        </g>
        <path class="soft" d="M60 552l5 5M65 552l-5 5M73 672l-3 12M73 672v12M73 672l3 12M146 745l-12-3M146 745h-12M146 745l-12 3"/>
        <path class="heavy" d="M379 283.500H743M379 407.500H743M379 737.500H743"/>
        <path class="tick" d="M806 275l17 17M806 318l17 17M797 729l17 17M846 729l17 17"/>
        <text class="axis" x="283" y="336">А</text>
        <text class="dimtext" transform="translate(810 266) rotate(-90)">130</text>
        <text class="dimtext" transform="translate(801 768) rotate(-90)">0</text>
        <text class="ucs" x="75" y="658">Y</text>
        <text class="ucs" x="167" y="754">X</text>
      </g>
    </svg>
  </div>
</main>

<section class="command">
  <i class="grip"></i>
  <div class="console">
    <div class="history"><pre>Команда: Противоположный угол:
Команда: *Прервано*</pre>
      <div class="vscroll"><button aria-label="Вверх"><svg class="up" viewBox="0 0 9 9"><use href="#ar"/></svg></button><button aria-label="Вниз"><svg viewBox="0 0 9 9"><use href="#ar"/></svg></button></div>
    </div>
    <div class="prompt">
      <label for="cmd">Команда:</label><input id="cmd" type="text" autocomplete="off">
      <div class="hscroll"><button aria-label="Влево"><svg class="left" viewBox="0 0 9 9"><use href="#ar"/></svg></button><i class="thumb"></i><button aria-label="Вправо"><svg class="right" viewBox="0 0 9 9"><use href="#ar"/></svg></button></div>
    </div>
  </div>
</section>

<footer class="status">Панель Рисование</footer>

<div class="taskbar">
  <button class="start" aria-label="Пуск"><svg viewBox="0 0 36 36"><circle cx="18" cy="18" r="17" fill="url(#orb)" stroke="#123647" stroke-width="2"/><path fill="#d7f2fa" fill-opacity=".35" d="M3 15C6-1 30-1 33 15c-8 6-22-4-30 0z"/><path fill="#e6f8ff" fill-opacity=".85" d="m13 13 4-1v6l-5 0zM18.500 12l5 1-1 6-4-1zM12 19.500h5v5.500l-5-1zM18.500 19.500l4.500.500-1 6-3.500-1z"/></svg></button>
  <button class="quick" aria-label="Калькулятор"><svg viewBox="0 0 16 16"><path fill="#bcd8f5" stroke="#4675ac" d="M3.500.500h10l-1 15h-10z"/><path fill="#fff" d="M5 2h7v3H5z"/><path stroke="#3a6aaa" stroke-width="1.500" stroke-dasharray="2 1" d="M5 7.500h7M5 10h7M4 12.500h7"/></svg></button>
  <button class="quick" aria-label="Nero"><svg viewBox="0 0 16 16"><circle cx="8" cy="8" r="7" fill="#b01815" stroke="#fff" stroke-width="1.300"/><path fill="#ffb527" d="M3 9C3 6 5 7 6 3c1 2 2 2 2 3 2-1 2-3 3-3 0 3 2 3 2 6z"/><path fill="#5a0a08" d="M3 9h10c-1 5-9 5-10 0z"/></svg></button>
  <div class="tasks">
    <button><svg viewBox="0 0 16 16"><path fill="#e0aa2d" d="M1 2h5l1 2h7v9H1z"/><path fill="#ffe58a" stroke="#c38e1c" stroke-width=".6" d="M3 6h12.500L14 14H1z"/></svg><span>АСК</span></button>
    <button><svg viewBox="0 0 16 16"><path fill="#b9b9b9" stroke="#555" stroke-width=".6" d="m1 8 7-6 7 5-6 8z"/><path fill="#ff9d23" stroke="#a94800" stroke-width=".7" d="m11 0-8 8h4l-4 7 10-9H9l5-5z"/></svg><span>3. 080 Ю. Савиче...</span></button>
    <button><svg viewBox="0 0 16 16"><path fill="#edf3fb" stroke="#6d8fc4" stroke-width=".8" d="M5 1h8l2 2v12H5z"/><path stroke="#7c9ccc" d="M8 6h6M8 8.500h6M8 11h6M8 13h6"/><path fill="#2456a8" stroke="#dbe8fa" d="M.500 1.500h9v9h-9z"/><path class="w" stroke-width="1.300" d="m2 4 1.500 5L5 5l1.500 4L8 4"/></svg><span>Копия 12 - Micros...</span></button>
    <button class="active"><svg viewBox="0 0 16 16"><use href="#acad"/></svg><span>AutoCAD 2007 - [...</span></button>
    <button><svg viewBox="0 0 16 16"><path fill="#a84b5c" d="m0 7 4-5v11z"/><path fill="#7fa4dc" d="m3 3 6-1v10l-5 2z"/><path fill="#d8e4f4" stroke="#8094b5" stroke-width=".6" d="m7 5 7-2 1.500 7L9 13z"/><path stroke="#2e9d3a" stroke-width="1.600" fill="none" d="m9 11 4-5m-3 0h3v3"/></svg><span>Таблица символов</span></button>
  </div>
  <div class="tray">
    <span class="lang">RU</span>
    <svg class="net" viewBox="0 0 8 8"><circle cx="4" cy="4" r="4" fill="#4c8cab"/><circle cx="3" cy="3" r="1.500" fill="#d6edf7"/></svg>
    <svg class="av" viewBox="0 0 16 14"><path fill="#e11218" d="M0 0h16L0 14z"/><path fill="#111" d="M16 0v14H0z"/><path stroke="#fff" stroke-width="1.600" fill="none" d="M12 3H4v4h4M15 1 1 13M8 11h5V7"/></svg>
    <time>17:20</time>
  </div>
</div>
</body>
</html>
```
FILE: styles.css
```css
* { box-sizing: border-box; }
html, body { height: 100%; }
body {
  margin: 0;
  display: flex;
  flex-direction: column;
  overflow: hidden;
  background: #ece9d8;
  color: #000;
  font: 12px/16px "DejaVu Sans Condensed", "DejaVu Sans", sans-serif;
}
button, select, input { font: inherit; color: inherit; margin: 0; padding: 0; border: 0; background: none; border-radius: 0; }
svg { display: block; flex: none; }
.defs { position: absolute; width: 0; height: 0; }
.ic { width: 16px; height: 16px; }

.k { fill: none; stroke: #111; }
.w { fill: none; stroke: #fff; }
.b2 { fill: none; stroke: #2463a3; }
.n { fill: #fff; stroke: #1a78c8; }
.p { fill: #1583dc; stroke: #0a4c86; stroke-width: .5; }
.tiny { font: bold 7px "Liberation Sans", sans-serif; fill: #123; }

/* Title bar */
.title {
  flex: none;
  display: flex;
  align-items: center;
  height: 30px;
  padding: 0 3px 0 2px;
  border-top: 1px solid #3b9ab5;
  border-bottom: 1px solid #3b9fbd;
  background:
    linear-gradient(#d8f0f0cc, #ffffff55 50%, #ffffff00 52%),
    linear-gradient(90deg, #63bcd8, #459fc0 18%, #55b4cb 34%, #4aa5b5 48%, #62b9bd 58%, #4ba6a7 70%, #6fc5c3 75%, #5ab09b 80%, #74c5b5 84%, #61b593 90%, #5fae8e);
}
.title h1 {
  flex: 1;
  margin: 0 0 0 4px;
  padding-top: 2px;
  font: bold 18px/26px "Open Sans", "Noto Sans", sans-serif;
  color: #fff;
  text-shadow: 1px 1px #0b2d8c, 2px 1px #1c4aa0;
  white-space: nowrap;
}
.winbtns { display: flex; gap: 2px; }
.winbtns button {
  display: grid;
  place-items: center;
  width: 35px;
  height: 17px;
  border: 1px solid #041c1e;
  border-radius: 2px;
  box-shadow: inset 0 0 0 1px #6dafac;
  background: linear-gradient(#8ec9c2, #3f9793 45%, #05696c 50%, #0b807d);
}
.winbtns svg { width: 12px; height: 12px; }

/* Menu */
.menu { flex: none; display: flex; align-items: center; gap: 1px; height: 20px; padding-left: 4px; }
.menu > button { padding: 0 7px; line-height: 20px; }
.menu > .ic { margin-right: -1px; }
.mdi { display: flex; gap: 2px; margin-left: auto; }
.mdi button { display: grid; place-items: center; width: 17px; height: 18px; background: #f7f6ee; border: 1px solid #fff; border-right-color: #dcd9c8; border-bottom-color: #dcd9c8; }
.mdi svg { width: 10px; height: 10px; }

/* Toolbars */
.row { flex: none; display: flex; height: 28px; }
.tb {
  display: flex;
  align-items: center;
  padding: 2px 3px 0 0;
  margin-right: 1px;
  border-top: 1px solid #fff;
  border-left: 1px solid #fff;
  border-right: 1px solid #aca899;
  border-bottom: 1px solid #aca899;
}
.row .tb + .tb { padding-left: 1px; }
.tb button { display: grid; place-items: center; width: 23px; height: 24px; }
.tb button svg { width: 16px; height: 16px; }
.tb .drop { width: 13px; }
.tb .drop svg { width: 5px; height: 3px; }
.grip { flex: none; width: 7px; height: 24px; margin: 0 3px 0 1px; border: solid; border-width: 0 1px; border-color: #fff #aca899 #aca899 #fff; background: linear-gradient(90deg, #0000 2px, #aca899 2px 3px, #0000 3px 4px, #fff 4px 5px, #0000 5px); }
.sep { flex: none; align-self: center; width: 6px; height: 20px; background: linear-gradient(90deg, #0000 2px, #c9c5b2 2px 3px, #fff8 3px 4px, #0000 4px); }

.combo { position: relative; display: block; height: 22px; border: 1px solid #7f9db9; background: #fff; }
.combo select { display: block; width: 100%; height: 20px; padding-left: 4px; appearance: none; opacity: 1; font-size: 11px; }
.state { position: absolute; left: 2px; top: 2px; display: flex; align-items: center; height: 16px; gap: 1px; pointer-events: none; }
.state svg { width: 16px; height: 16px; }
.swatch { width: 10px; height: 10px; background: #000; }
.rule { height: 1px; background: #000; }
.arrow { position: absolute; right: 0; top: 0; display: grid; place-items: center; width: 18px; height: 20px; border: 1px solid #dddccf; background: linear-gradient(135deg, #fff, #eceade); pointer-events: none; }
.arrow svg { width: 9px; height: 9px; }
.combo.off { border-color: #c9c7ba; background: #ece9d8; color: #aca899; }
.combo.off .arrow { background: #d4d2cb; border-color: #bcbab0; opacity: .7; }
.combo.off .arrow svg { opacity: .3; }
.view { width: 140px; }
.layer { width: 300px; }
.layer select { padding-left: 85px; }
.layer .swatch { margin-left: 1px; }
.color { width: 150px; }
.color select { padding-left: 19px; }
.color .state { left: 5px; }
.ltype { width: 160px; }
.ltype select { padding-left: 69px; }
.ltype .state, .lweight .state { left: 4px; }
.ltype .rule { width: 60px; }
.lweight { width: 125px; }
.lweight select { padding-left: 44px; }
.lweight .rule { width: 35px; }
.pstyle { width: 120px; }
.pstyle select { padding-left: 9px; }
.dim { width: 100px; }

/* Work area */
.work { flex: 1; display: flex; align-items: flex-start; min-height: 0; padding: 1px 1px 0 0; }
.vtb { flex: none; display: flex; flex-direction: column; width: 25px; margin-right: 1px; padding: 0 2px 4px 0; border: 1px solid #fff; border-right-color: #aca899; border-bottom-color: #aca899; }
.vtb button { display: grid; place-items: center; height: 22px; }
.vtb svg { width: 16px; height: 16px; }
.hgrip { height: 7px; margin: 1px 0 1px 2px; border: solid; border-width: 1px 0; border-color: #fff #aca899 #aca899; background: linear-gradient(#0000 1px, #aca899 1px 2px, #0000 2px 3px, #fff 3px 4px, #0000 4px); }
.canvas { flex: 1; align-self: stretch; min-width: 0; overflow: hidden; border-left: 2px solid #77756a; border-top: 1px solid #77756a; border-bottom: 1px solid #ece9d8; background: #fff; }
.drawing { width: 100%; height: 100%; }
.thin { fill: none; stroke: #000; stroke-width: 1; shape-rendering: crispEdges; }
.soft { fill: none; stroke: #999; stroke-width: 1; }
.heavy { stroke: #000; stroke-width: 3; }
.tick { stroke: #000; stroke-width: 3; }
.axis { font: 27px Lato, "Liberation Sans", sans-serif; text-anchor: middle; }
.dimtext { font: 25px Lato, "Liberation Sans", sans-serif; }
.ucs { font: 300 22px Lato, "Liberation Sans", sans-serif; text-anchor: middle; }

/* Command line */
.command { flex: none; display: flex; align-items: flex-start; height: 81px; padding: 9px 7px 0 5px; border-top: 2px solid #fff; border-bottom: 1px solid #aca899; background: linear-gradient(#ece9d8 3px, #000 3px 4px, #0000 4px); }
.command .grip { height: 60px; margin: 2px 3px 0 1px; border-bottom: 1px solid #aca899; }
.console { flex: 1; min-width: 0; border-top: 2px solid #000; border-left: 1px solid #000; font: 13px/16px "Liberation Mono", monospace; margin-top: 3px; }
.history { display: flex; height: 42px; background: #fff; border-bottom: 1px solid #aca899; }
.history pre { flex: 1; margin: 0; padding: 2px; font: inherit; }
.vscroll { display: flex; flex-direction: column; gap: 2px; width: 19px; }
.vscroll button { flex: 1; }
.command button { display: grid; place-items: center; width: 19px; border: 1px solid #d2d0c4; border-radius: 2px; background: linear-gradient(135deg, #fff, #edebe0); }
.command button svg { width: 9px; height: 9px; }
.up { transform: rotate(180deg); }
.left { transform: rotate(90deg); }
.right { transform: rotate(-90deg); }
.prompt { display: flex; align-items: stretch; height: 19px; margin-right: 20px; background: #fff; }
.prompt label { padding: 3px 0 0 2px; }
.prompt input { flex: 1; min-width: 0; outline: 0; }
.hscroll { display: flex; width: 76px; padding-left: 2px; border-left: 1px solid #ece9d8; background: #f6f5ee; }
.thumb { width: 18px; margin-right: auto; border: 1px solid #d2d0c4; background: repeating-linear-gradient(90deg, #aaa 0 1px, #0000 1px 2px) 4px 5px / 8px 7px no-repeat, #f5f4ec; }

/* Status bar */
.status { flex: none; height: 21px; padding: 3px 7px 0; border-top: 1px solid #fff; background: linear-gradient(#d9d6c6, #ece9d8 4px); font-size: 11px; line-height: 17px; }

/* Taskbar */
.taskbar { flex: none; display: flex; align-items: center; height: 30px; padding-left: 14px; border-top: 1px solid #3a3a3a; background: linear-gradient(#8c8c8c, #4c4c4c 46%, #000 50%); color: #fff; }
.start { align-self: flex-start; width: 36px; height: 29px; overflow: hidden; margin-right: 25px; }
.start svg { width: 36px; height: 36px; }
.quick { width: 24px; }
.quick svg { width: 16px; height: 16px; }
.tasks { display: flex; gap: 3px; margin-left: 3px; }
.tasks button { display: flex; align-items: center; gap: 4px; width: 157px; height: 26px; padding: 0 8px; border: 1px solid #5c5760; border-radius: 3px; background: linear-gradient(#6e6e6e, #333 48%, #000 52%); text-align: left; white-space: nowrap; }
.tasks .active { background: linear-gradient(#0c0c0c, #1d1d1d 50%, #3c3c3c); }
.tasks svg { width: 16px; height: 16px; }
.tray { display: flex; align-items: center; margin-left: auto; padding-right: 14px; }
.lang { width: 16px; background: #18a0ff; margin-right: 17px; line-height: 15px; }
.net { width: 8px; height: 8px; margin-right: 7px; }
.av { width: 16px; height: 14px; margin-right: 8px; }
```
